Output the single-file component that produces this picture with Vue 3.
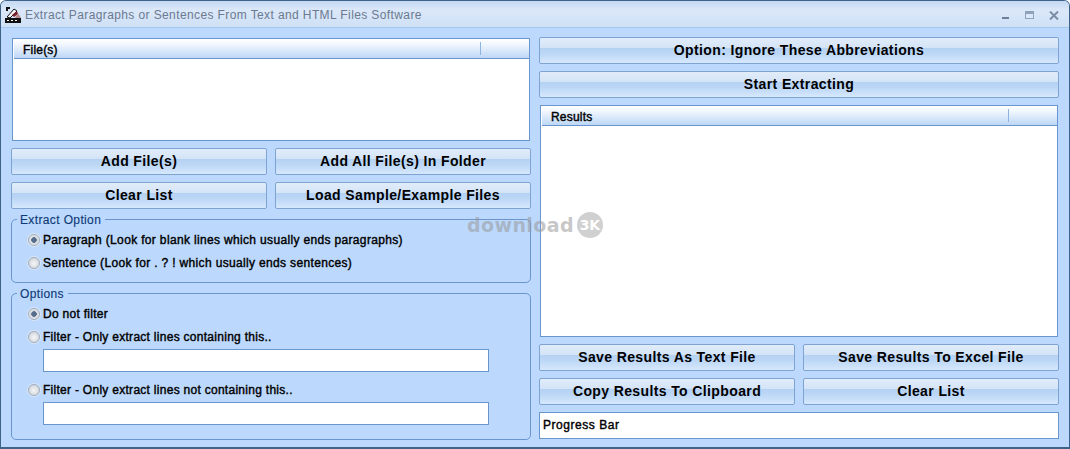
<script setup>
const topButtons = ['Add File(s)', 'Add All File(s) In Folder', 'Clear List', 'Load Sample/Example Files']
const bottomButtons = ['Save Results As Text File', 'Save Results To Excel File', 'Copy Results To Clipboard', 'Clear List']
</script>

<template>
  <div class="window">
    <header class="titlebar">
      <svg class="app-icon" width="17" height="17" viewBox="0 0 17 17">
        <rect x="0" y="11" width="16" height="5" fill="#111" />
        <path d="M1 0h4v2H3v2H1z" fill="#111" />
        <path d="M2 10 9 2l3 2-7 7z" fill="#f4f4f4" stroke="#111" stroke-width="1" />
        <path d="M7 8l5-4 1 3-4 3z" fill="#7a1f2c" />
        <path d="M10 11l3-5 3 5z" fill="#b98a8a" />
        <path d="M2 13h2v1H2zM6 13h2v1H6zM10 13h2v1h-2z" fill="#fff" />
      </svg>
      <span class="title">Extract Paragraphs or Sentences From Text and HTML Files Software</span>
      <div class="win-controls">
        <span class="ctl-min"></span>
        <span class="ctl-max"></span>
        <svg class="ctl-close" width="10" height="9" viewBox="0 0 10 9">
          <path d="M1 .5 9 8.5M9 .5 1 8.5" stroke="#7a8ca4" stroke-width="2" fill="none" />
        </svg>
      </div>
    </header>

    <main class="body">
      <section class="col">
        <div class="list files">
          <div class="list-head"><span class="head-cell">File(s)</span><span class="head-rest"></span></div>
        </div>
        <div class="btn-grid">
          <button v-for="b in topButtons" :key="b" class="btn">{{ b }}</button>
        </div>
        <div class="group extract">
          <span class="legend">Extract Option</span>
          <label class="radio"><i class="dot on"></i>Paragraph (Look for blank lines which usually ends paragraphs)</label>
          <label class="radio"><i class="dot"></i>Sentence (Look for . ? ! which usually ends sentences)</label>
        </div>
        <div class="group options">
          <span class="legend">Options</span>
          <label class="radio"><i class="dot on"></i>Do not filter</label>
          <label class="radio"><i class="dot"></i>Filter - Only extract lines containing this..</label>
          <div class="field"></div>
          <label class="radio third"><i class="dot"></i>Filter - Only extract lines not containing this..</label>
          <div class="field"></div>
        </div>
      </section>

      <section class="col right">
        <button class="btn wide">Option: Ignore These Abbreviations</button>
        <button class="btn wide">Start Extracting</button>
        <div class="list results">
          <div class="list-head"><span class="head-cell">Results</span><span class="head-rest"></span></div>
        </div>
        <div class="btn-grid">
          <button v-for="b in bottomButtons" :key="b" class="btn">{{ b }}</button>
        </div>
        <div class="progress">Progress Bar</div>
      </section>
    </main>

    <div class="watermark">
      <span class="wm-text">download</span>
      <span class="wm-badge">3K</span>
    </div>
  </div>
</template>

<style scoped>
.window {
  position: relative;
  box-sizing: border-box;
  width: 1070px;
  height: 449px;
  overflow: hidden;
  background: #bcd9fd;
  border: 1px solid #3f6288;
  border-bottom-width: 2px;
  border-radius: 6px 6px 0 0;
  font-family: "Liberation Sans", Arial, sans-serif;
  color: #000;
}
.titlebar {
  display: flex;
  align-items: center;
  box-sizing: border-box;
  height: 27px;
  padding: 2px 10px 0 4px;
  background: linear-gradient(#c4d9f3, #dbe8f9 35%, #cfe0f6);
  border-bottom: 1px solid #a4c8ee;
}
.app-icon { flex: none; margin-right: 3px; }
.title {
  font-size: 12px;
  letter-spacing: 0.39px;
  color: #6b7a90;
}
.win-controls {
  margin-left: auto;
  display: flex;
  align-items: center;
}
.ctl-min {
  width: 7px;
  height: 2px;
  margin: 6px 16px 0 0;
  background: #6d7f96;
}
.ctl-max {
  box-sizing: border-box;
  width: 9px;
  height: 8px;
  margin-right: 15px;
  border: 1px solid #8ea3bb;
  border-top-width: 3px;
  background: #dbe8f9;
}
.body {
  display: flex;
  gap: 8px;
  padding: 9px 10px 0;
}
.col {
  width: 520px;
  display: flex;
  flex-direction: column;
}
.list {
  box-sizing: border-box;
  margin: 1px 1px 0;
  background: #fff;
  border: 1px solid #6a96cf;
}
.files { height: 103px; }
.results { height: 232px; margin-top: 7px; }
.list-head {
  display: flex;
  height: 20px;
  box-sizing: border-box;
  border-bottom: 1px solid #6a96cf;
  margin-left: 1px;
  background: linear-gradient(#ffffff, #f3f8fe 25%, #bdd7f6);
  font-size: 12px;
  line-height: 23px;
  letter-spacing: 0.2px;
  -webkit-text-stroke: 0.4px #000;
}
.head-cell {
  width: 466px;
  padding-left: 9px;
  box-sizing: border-box;
}
.head-rest {
  width: 1px;
  height: 13px;
  margin-top: 3px;
  background: #8fb3e0;
}
.btn-grid {
  display: grid;
  grid-template-columns: 1fr 1fr;
  gap: 7px 8px;
  margin-top: 7px;
}
.btn {
  box-sizing: border-box;
  height: 27px;
  padding: 0 0 2px;
  border: 1px solid #7fa3d3;
  border-radius: 2px;
  background: linear-gradient(#e1ecf9, #d4e4f7 38%, #b6d2f3 42%, #bcd7f6 62%, #d6e8fc);
  font-family: inherit;
  font-size: 14px;
  font-weight: 700;
  letter-spacing: 0.38px;
  color: #000;
}
.wide { width: 520px; }
.wide + .wide { margin-top: 7px; }
.group {
  position: relative;
  box-sizing: border-box;
  border: 1px solid #6a96cf;
  border-radius: 5px;
  display: flex;
  flex-direction: column;
  align-items: flex-start;
  padding-left: 16px;
  font-size: 12px;
}
.extract { height: 64px; margin-top: 10px; padding-top: 13px; gap: 9px; }
.options { height: 147px; margin-top: 10px; padding-top: 13px; }
.legend {
  position: absolute;
  top: -7px;
  left: 5px;
  padding: 0 4px 0 3px;
  background: #bcd9fd;
  color: #0f3a78;
  font-size: 12px;
  line-height: 14px;
  letter-spacing: 0.37px;
  -webkit-text-stroke: 0.15px #0f3a78;
}
.radio {
  display: flex;
  align-items: center;
  height: 14px;
  letter-spacing: 0.34px;
  -webkit-text-stroke: 0.4px #000;
}
.options .radio { letter-spacing: 0.28px; }
.options .radio + .radio { margin-top: 9px; }
.options .third { margin-top: 11px; }
.dot {
  box-sizing: border-box;
  width: 12px;
  height: 12px;
  margin-right: 3px;
  border-radius: 50%;
  border: 1px solid #a3aebd;
  background: radial-gradient(circle at 50% 55%, #f6f6f6, #c6ccd4);
  box-shadow: 0 0 0 1px #d8e5f6;
}
.dot.on { background: radial-gradient(circle, #566d8c 0 2.5px, #d5dae0 3px, #f2f2f2); }
.field {
  box-sizing: border-box;
  width: 446px;
  height: 23px;
  margin: 5px 0 0 15px;
  background: #fff;
  border: 1px solid #6a96cf;
}
.progress {
  box-sizing: border-box;
  height: 27px;
  margin-top: 7px;
  padding-left: 3px;
  background: #fff;
  border: 1px solid #6a96cf;
  font-size: 12px;
  line-height: 25px;
  letter-spacing: 0.55px;
  -webkit-text-stroke: 0.4px #000;
}
.watermark {
  position: absolute;
  left: 466px;
  top: 211px;
  display: flex;
  align-items: center;
  gap: 3px;
  height: 26px;
  pointer-events: none;
}
.wm-text {
  font-family: "DejaVu Sans", sans-serif;
  font-size: 19px;
  font-weight: 700;
  letter-spacing: 0.4px;
  color: rgba(150, 150, 150, 0.55);
}
.wm-badge {
  width: 26px;
  height: 26px;
  border-radius: 50%;
  background: rgba(170, 170, 170, 0.55);
  color: #fff;
  font-family: "DejaVu Sans", sans-serif;
  font-size: 14px;
  font-weight: 700;
  line-height: 26px;
  text-align: center;
}
</style>

<style>
html, body { margin: 0; }
</style>
